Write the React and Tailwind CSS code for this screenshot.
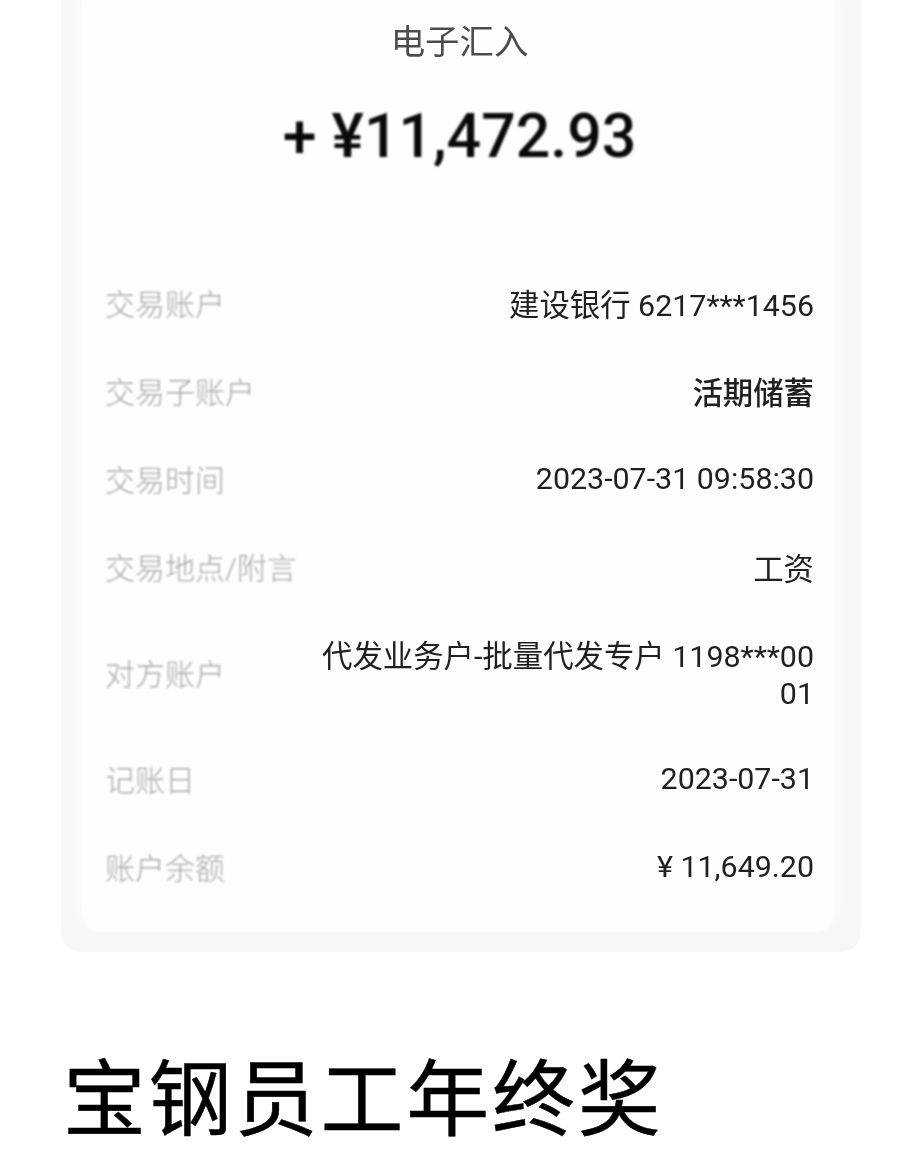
const rows = [
  { label: '交易账户', value: '建设银行 6217***1456', box: 'h-[88px]' },
  { label: '交易子账户', value: '活期储蓄', box: 'h-[88px]', bold: true },
  { label: '交易时间', value: '2023-07-31 09:58:30', box: 'h-[88px]', numeric: true },
  { label: '交易地点/附言', value: '工资', box: 'h-[88px]' },
  { label: '对方账户', value: '代发业务户-批量代发专户 1198***00\n01', box: 'h-[124px]' },
  { label: '记账日', value: '2023-07-31', box: 'h-[88px]', numeric: true },
  { label: '账户余额', value: '¥ 11,649.20', box: 'h-[88px]', numeric: true },
];

function Row({ label, value, box, bold, numeric }) {
  return (
    <div className={`flex items-center justify-between ${box}`}>
      <span className="mb-[1px] whitespace-nowrap text-[30px] font-light leading-[37px] text-[#a8a8a8] blur-[0.9px]">
        {label}
      </span>
      <span
        className={`whitespace-pre text-right text-[30.4px] leading-[37px] text-[#202020] blur-[0.7px] ${bold ? 'font-medium' : 'font-normal'} ${numeric ? 'mb-[6px]' : ''}`}
      >
        {value}
      </span>
    </div>
  );
}

export default function App() {
  return (
    <main className="h-[1160px] overflow-hidden bg-white font-[Roboto,'Noto_Sans_CJK_SC',sans-serif]">
      <section className="ml-[61px] h-[952px] w-[800px] overflow-hidden rounded-b-[20px] bg-[#f7f7f7] pr-[26px] pb-[20px] pl-[21px]">
        <div className="h-full rounded-b-[20px] bg-[#fefefe] pr-[21px] pl-[23px] shadow-[0_-4px_14px_1px_#fefefe]">
          <h2 className="pt-[22px] text-center text-[34.4px] leading-[40px] font-normal text-[#4c4c4c] blur-[0.6px]">
            电子汇入
          </h2>
          <p className="mt-[39px] text-center text-[60.8px] leading-[72px] font-medium whitespace-nowrap text-[#090909] blur-[0.8px]">
            + ¥11,472.93
          </p>
          <div className="mt-[88px]">
            {rows.map((row) => (
              <Row key={row.label} {...row} />
            ))}
          </div>
        </div>
      </section>
      <h1 className="mt-[87px] ml-[63px] text-[83px] leading-[124px] font-normal tracking-[2.8px] whitespace-nowrap text-black [-webkit-text-stroke:0.5px_black]">
        宝钢员工年终奖
      </h1>
    </main>
  );
}
